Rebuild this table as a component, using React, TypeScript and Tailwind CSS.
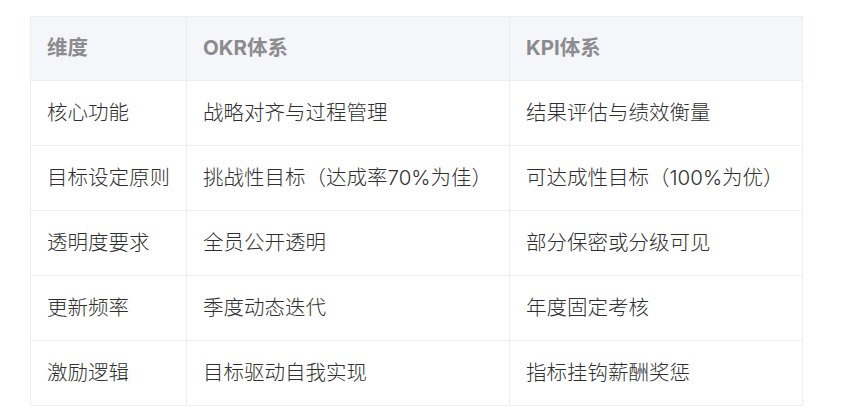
import React from 'react';

const rows: [string, string, string][] = [
  ['核心功能', '战略对齐与过程管理', '结果评估与绩效衡量'],
  ['目标设定原则', '挑战性目标（达成率70%为佳）', '可达成性目标（100%为优）'],
  ['透明度要求', '全员公开透明', '部分保密或分级可见'],
  ['更新频率', '季度动态迭代', '年度固定考核'],
  ['激励逻辑', '目标驱动自我实现', '指标挂钩薪酬奖惩'],
];

const App: React.FC = () => {
  return (
    <div
      className="min-h-screen bg-white pt-4 pl-[30px]"
      style={{ fontFamily: 'Inter, "Noto Sans CJK SC", sans-serif' }}
    >
      <div className="grid w-[773px] grid-cols-[156px_323px_293px] border-r border-b border-[#eceef2] text-[20.5px]">
        {['维度', 'OKR体系', 'KPI体系'].map((h) => (
          <div
            key={h}
            className="flex h-[64px] items-center border-t border-l border-[#eceef2] bg-[#f5f6fa] px-4 font-bold text-[#8c8c8f]"
          >
            {h}
          </div>
        ))}
        {rows.map((r) =>
          r.map((c, i) => (
            <div
              key={r[0] + i}
              className="flex h-[65px] items-center border-t border-l border-[#eceef2] px-4 font-light text-[#2f2f2f]"
            >
              {c}
            </div>
          ))
        )}
      </div>
    </div>
  );
};

export default App;
